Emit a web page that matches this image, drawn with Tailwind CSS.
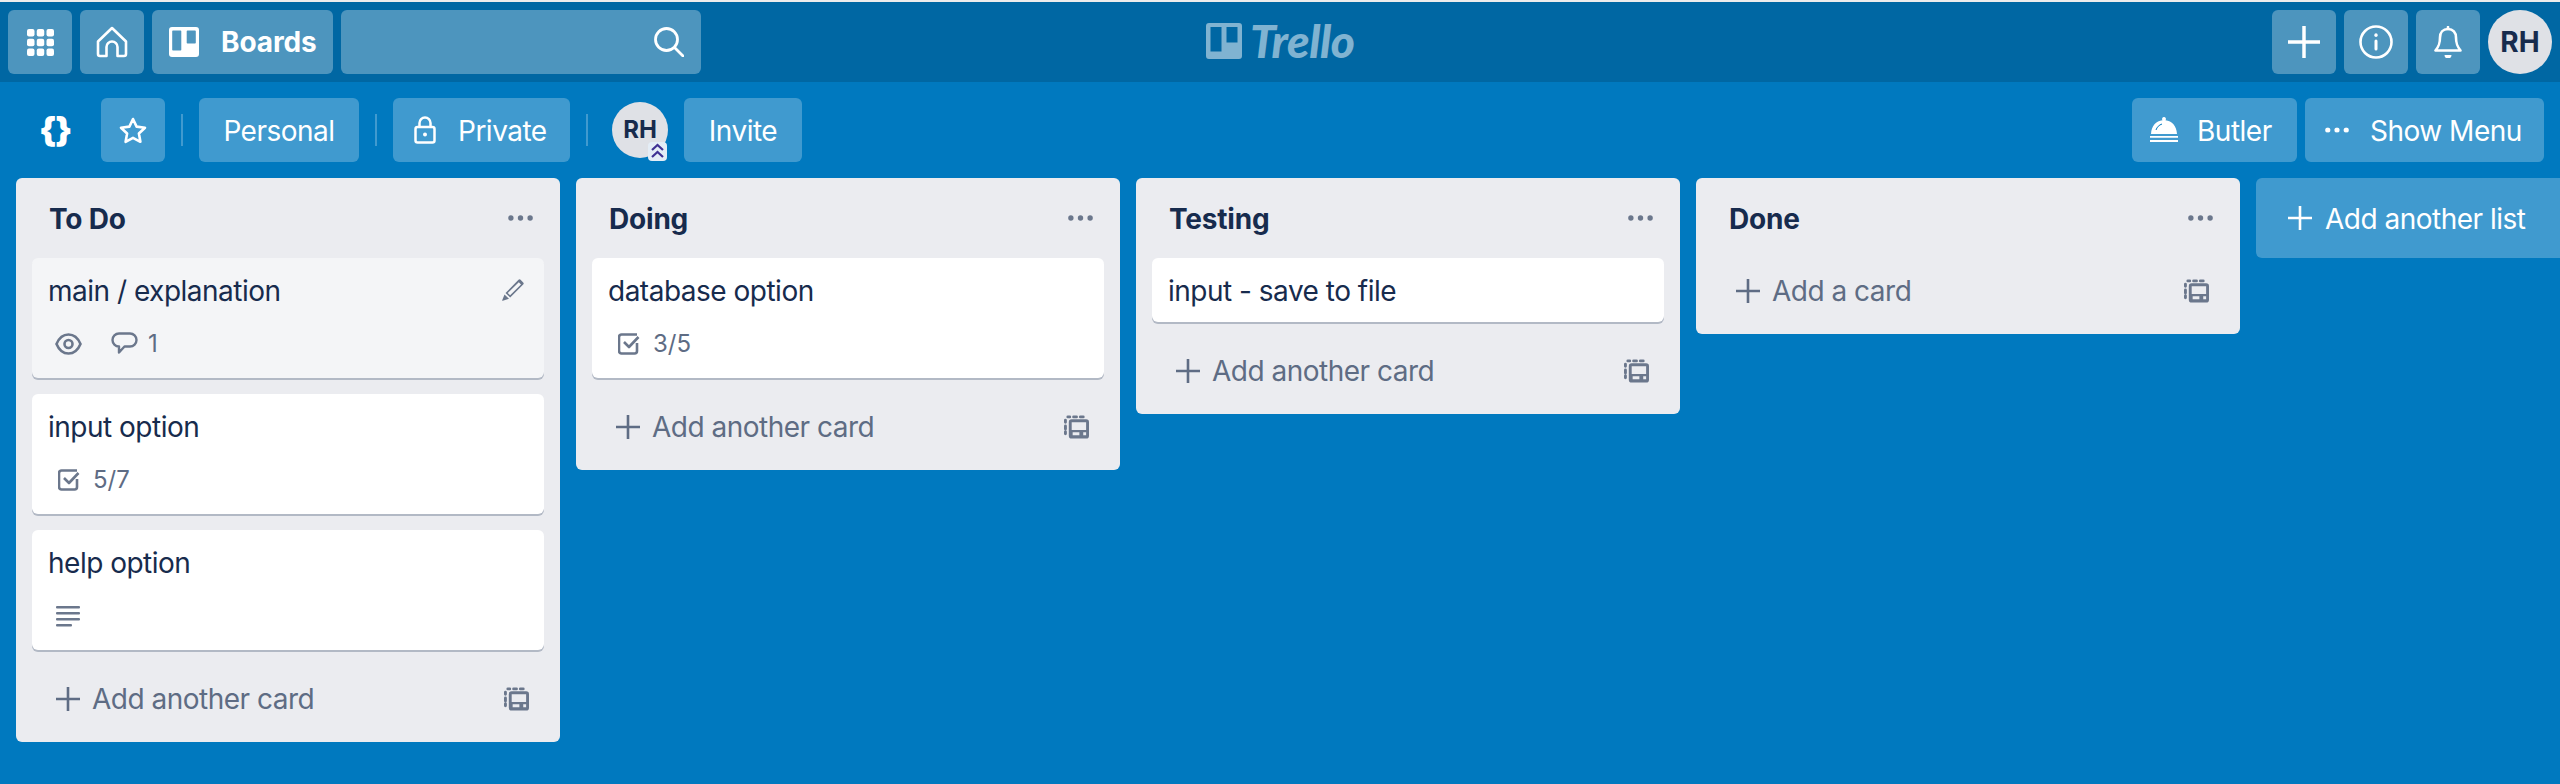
<!DOCTYPE html>
<html lang="en">

<head>
    <meta charset="UTF-8">
    <meta name="viewport" content="width=device-width, initial-scale=1.0">
    <title>Trello board</title>
    <script src="https://cdn.jsdelivr.net/npm/@tailwindcss/browser@4"></script>
</head>

<body class="h-screen overflow-hidden bg-[#0079BF] font-['Inter',sans-serif] text-[28px] tracking-[-0.5px] text-[#172B4D]">
    <!-- shared icons -->
    <svg class="hidden">
        <symbol id="dots" viewBox="0 0 26 6"><circle cx="3" cy="3" r="2.8" /><circle cx="13" cy="3" r="2.8" /><circle cx="23" cy="3" r="2.8" /></symbol>
        <symbol id="plus" viewBox="0 0 24 24"><path d="M12 0v24M0 12h24" stroke="currentColor" stroke-width="2.6" stroke-linecap="round" fill="none" /></symbol>
        <symbol id="template" viewBox="0 0 26 24">
            <path d="M4 1.500h2M10 1.500h3M17 1.500h3M1.500 5v2M1.500 11v3M1.500 17v2" stroke="currentColor" stroke-width="3" stroke-linecap="round" fill="none" />
            <path fill-rule="evenodd" d="M8 4h15a3 3 0 0 1 3 3v14a3 3 0 0 1-3 3H8a3 3 0 0 1-3-3V7a3 3 0 0 1 3-3zm0 3v8h15V7zm1 10.500v3h7v-3zm11 0v3h3v-3z" />
        </symbol>
    </svg>

    <div class="h-[2px] bg-[#ececec]"></div>

    <!-- top nav -->
    <header class="relative flex items-center gap-2 h-20 px-2 bg-[#0067A3] text-white">
        <button class="flex items-center justify-center w-16 h-16 rounded-md bg-white/30">
            <svg class="w-[27px] h-[27px]" viewBox="0 0 27 27" fill="currentColor">
                <rect x="0" y="0" width="7.500" height="7.500" rx="2" /><rect x="9.750" y="0" width="7.500" height="7.500" rx="2" /><rect x="19.500" y="0" width="7.500" height="7.500" rx="2" />
                <rect x="0" y="9.750" width="7.500" height="7.500" rx="2" /><rect x="9.750" y="9.750" width="7.500" height="7.500" rx="2" /><rect x="19.500" y="9.750" width="7.500" height="7.500" rx="2" />
                <rect x="0" y="19.500" width="7.500" height="7.500" rx="2" /><rect x="9.750" y="19.500" width="7.500" height="7.500" rx="2" /><rect x="19.500" y="19.500" width="7.500" height="7.500" rx="2" />
            </svg>
        </button>
        <button class="flex items-center justify-center w-16 h-16 rounded-md bg-white/30">
            <svg class="w-[32px] h-[32px]" viewBox="0 0 32 32" fill="none" stroke="currentColor" stroke-width="2.600" stroke-linejoin="round">
                <path d="M16 2 2 15.500V28a2 2 0 0 0 2 2h6.500V21a5.500 5.500 0 0 1 11 0v9H28a2 2 0 0 0 2-2V15.500z" />
            </svg>
        </button>
        <button class="flex items-center w-[181px] h-16 pl-[17px] rounded-md bg-white/30 font-bold">
            <svg class="w-[30px] h-[30px] shrink-0" viewBox="0 0 30 30" fill="currentColor">
                <path fill-rule="evenodd" d="M3 0h24a3 3 0 0 1 3 3v24a3 3 0 0 1-3 3H3a3 3 0 0 1-3-3V3a3 3 0 0 1 3-3zm1 3.500a.8.8 0 0 0-.8.8v18.400a.8.8 0 0 0 .8.8h7.500a.8.8 0 0 0 .8-.8V4.300a.8.8 0 0 0-.8-.8zm14.500 0a.8.8 0 0 0-.8.8v11.400a.8.8 0 0 0 .8.8H26a.8.8 0 0 0 .8-.8V4.300a.8.8 0 0 0-.8-.8z" />
            </svg>
            <span class="ml-[22px] tracking-[-0.1px]">Boards</span>
        </button>
        <div class="flex items-center justify-end w-[360px] h-16 pr-[17px] rounded-md bg-white/30">
            <svg class="w-[30px] h-[30px]" viewBox="0 0 30 30" fill="none" stroke="currentColor" stroke-width="2.800" stroke-linecap="round">
                <circle cx="12.500" cy="12.500" r="11" /><path d="m21 21 8 8" />
            </svg>
        </div>

        <!-- logo sits centred over the bar -->
        <div class="absolute left-[1206px] top-[21px] flex items-center gap-2 text-[#80B3D1]">
            <svg class="w-9 h-9" viewBox="0 0 36 36" fill="currentColor">
                <path fill-rule="evenodd" d="M3 0h30a3 3 0 0 1 3 3v30a3 3 0 0 1-3 3H3a3 3 0 0 1-3-3V3a3 3 0 0 1 3-3zm1.500 4v24.500h11V4zm16 0v15.500h11V4z" />
            </svg>
            <span class="font-['Lato',sans-serif] text-[46px] leading-[36px] font-black italic tracking-[-0.5px]">Trello</span>
        </div>

        <button class="flex items-center justify-center w-16 h-16 ml-auto rounded-md bg-white/30">
            <svg class="w-[32px] h-[32px]"><use href="#plus" /></svg>
        </button>
        <button class="flex items-center justify-center w-16 h-16 rounded-md bg-white/30">
            <svg class="w-[34px] h-[34px]" viewBox="0 0 34 34" fill="none" stroke="currentColor" stroke-width="2.600" stroke-linecap="round">
                <circle cx="17" cy="17" r="15.500" /><path d="M17 16v8" stroke-width="3" /><path d="M17 10v.2" stroke-width="3.400" />
            </svg>
        </button>
        <button class="flex items-center justify-center w-16 h-16 rounded-md bg-white/30">
            <svg class="w-[28px] h-[32px]" viewBox="0 0 28 32" fill="none" stroke="currentColor" stroke-width="2.600" stroke-linejoin="round">
                <path d="M14 3c-5 0-8 3.500-8 8.500 0 6-1 8.500-4.500 13h25C23 20 22 17.500 22 11.500 22 6.500 19 3 14 3z" />
                <path d="M14 1v2" stroke-linecap="round" /><path d="M10.500 29h7a3.500 3.500 0 0 1-7 0z" fill="currentColor" stroke="none" />
            </svg>
        </button>
        <div class="flex items-center justify-center w-16 h-16 rounded-full bg-[#DFE1E6] font-bold tracking-normal text-[#172B4D]">RH</div>
    </header>

    <!-- board bar -->
    <div class="flex items-center h-16 mt-4 pl-[39px] pr-4 text-white">
        <span class="w-[62px] text-[34px] leading-none font-black tracking-[-1px]">{}</span>
        <button class="flex items-center justify-center w-16 h-16 rounded-md bg-white/25">
            <svg class="w-[28px] h-[27px]" viewBox="0 0 28 27" fill="none" stroke="currentColor" stroke-width="2.600" stroke-linejoin="round">
                <path d="m14 2 3.600 7.600 8.400 1.100-6.100 5.800 1.500 8.300L14 20.800l-7.400 4 1.500-8.300L2 10.700l8.400-1.100z" />
            </svg>
        </button>
        <div class="w-[2px] h-8 mx-4 bg-white/25"></div>
        <button class="h-16 w-40 pt-[2px] rounded-md bg-white/25">Personal</button>
        <div class="w-[2px] h-8 mx-4 bg-white/25"></div>
        <button class="flex items-center w-[177px] h-16 pl-[21px] rounded-md bg-white/25">
            <svg class="w-[22px] h-[28px]" viewBox="0 0 22 28" fill="none" stroke="currentColor" stroke-width="2.500" stroke-linejoin="round">
                <rect x="1.500" y="11" width="19" height="15.500" rx="2" /><path d="M5.500 11V7a5.500 5.500 0 0 1 11 0v4" /><circle cx="11" cy="18.500" r="2" fill="currentColor" stroke="none" />
            </svg>
            <span class="ml-[22px] pt-[2px]">Private</span>
        </button>
        <div class="w-[2px] h-8 ml-4 mr-6 bg-white/25"></div>
        <div class="relative flex items-center justify-center w-14 h-14 rounded-full bg-[#DFE1E6] text-[24px] font-bold tracking-normal text-[#172B4D]">
            RH
            <svg class="absolute left-[36px] top-[40px] w-[19px] h-[19px] rounded-sm bg-[#E4EDF6]" viewBox="0 0 19 19" fill="none" stroke="#403294" stroke-width="2.200">
                <path d="m4 8 5.500-5L15 8M4 15l5.500-5 5.500 5" />
            </svg>
        </div>
        <button class="h-16 w-[118px] ml-4 pt-[2px] rounded-md bg-white/25">Invite</button>

        <button class="flex items-center w-[165px] h-16 ml-auto pl-[18px] rounded-md bg-white/25">
            <svg class="w-[28px] h-[26px]" viewBox="0 0 28 26" fill="currentColor">
                <path d="M14 0a2 2 0 0 1 1.500 3.300C22 4 26.500 9 27 17H1C1.500 9 6 4 12.500 3.300A2 2 0 0 1 14 0z" />
                <path d="M0 19h28v1.800H0zM0 23h28v2H0z" />
                <path d="M6 13c1-3 3-5 6-6" stroke="#0079BF" stroke-width="1" fill="none" />
            </svg>
            <span class="ml-[19px] pt-[2px]">Butler</span>
        </button>
        <button class="flex items-center w-[239px] h-16 ml-2 pl-5 rounded-md bg-white/25">
            <svg class="w-6 h-[6px] fill-current" viewBox="0 0 26 6"><use href="#dots" /></svg>
            <span class="ml-[21px] pt-[2px]">Show Menu</span>
        </button>
    </div>

    <!-- lists -->
    <main class="flex items-start gap-4 mt-4 pl-4">
        <section class="w-[544px] shrink-0 px-4 pb-2 rounded-md bg-[#EBECF0]">
            <div class="flex items-center justify-between h-20 pl-[17px] pr-[11px]">
                <h2 class="pt-[2px] font-bold tracking-[-0.2px]">To Do</h2>
                <svg class="w-[25px] h-[6px] fill-[#6B778C]"><use href="#dots" /></svg>
            </div>
            <div class="relative mb-4 px-4 pt-[13px] pb-[12px] rounded-md bg-[#F4F5F7] shadow-[0_2px_0_rgba(9,30,66,0.25)]">
                <div class="leading-10">main / explanation</div>
                <svg class="absolute right-[20px] top-[21px] w-[22px] h-[22px]" viewBox="0 0 22 22" fill="#6B778C">
                    <path fill-rule="evenodd" d="M16.500.8a1.500 1.500 0 0 1 2.100 0l2.600 2.600a1.500 1.500 0 0 1 0 2.100L8.200 18.500 3.500 14zM16.800 3.300 5.800 14l2.300 2.300L19 5.500zM2.500 15.500l4.500 4.200-6.200 2.100a.5.5 0 0 1-.6-.6z" />
                </svg>
                <div class="flex items-center h-11 mt-[11px] pl-[7px] text-[24px] tracking-normal text-[#5E6C84]">
                    <svg class="w-[27px] h-[22px]" viewBox="0 0 27 22" fill="none" stroke="#6B778C" stroke-width="2.600">
                        <path d="M1.500 11C4 5 8 1.500 13.500 1.500S23 5 25.500 11C23 17 19 20.500 13.500 20.500S4 17 1.500 11z" /><circle cx="13.500" cy="11" r="4" />
                    </svg>
                    <svg class="w-[27px] h-[24px] ml-[29px]" viewBox="0 0 27 24" fill="none" stroke="#6B778C" stroke-width="2.400" stroke-linejoin="round">
                        <path d="M8 1.500h11a6.500 6.500 0 0 1 0 13h-5.500L8 20.500v-6a6.500 6.500 0 0 1 0-13z" />
                    </svg>
                    <span class="ml-[10px]">1</span>
                </div>
            </div>
            <div class="mb-4 px-4 pt-[13px] pb-[12px] rounded-md bg-white shadow-[0_2px_0_rgba(9,30,66,0.25)]">
                <div class="leading-10">input option</div>
                <div class="flex items-center h-11 mt-[11px] pl-[10px] text-[24px] tracking-normal text-[#5E6C84]">
                    <svg class="w-[22px] h-[22px]" viewBox="0 0 22 22" fill="none" stroke="#6B778C" stroke-width="2.600" stroke-linejoin="round">
                        <path d="M19 10v8a2.500 2.500 0 0 1-2.500 2.500h-13A2.500 2.500 0 0 1 1 18V4a2.500 2.500 0 0 1 2.500-2.500H19" /><path d="m6 9 5 5 9.500-10" />
                    </svg>
                    <span class="ml-[13px]">5/7</span>
                </div>
            </div>
            <div class="mb-4 px-4 pt-[13px] pb-[12px] rounded-md bg-white shadow-[0_2px_0_rgba(9,30,66,0.25)]">
                <div class="leading-10">help option</div>
                <div class="flex items-center h-11 mt-[11px] pl-2">
                    <svg class="w-6 h-[21px]" viewBox="0 0 24 21" fill="#6B778C">
                        <rect y="0" width="24" height="2.600" rx="1" /><rect y="6" width="24" height="2.600" rx="1" /><rect y="12" width="24" height="2.600" rx="1" /><rect y="18" width="16" height="2.600" rx="1" />
                    </svg>
                </div>
            </div>
            <div class="flex items-center h-[68px] pb-[3px] pl-6 pr-[15px] text-[#5E6C84]">
                <svg class="w-6 h-6 fill-none"><use href="#plus" /></svg>
                <span class="ml-3">Add another card</span>
                <svg class="w-[25px] h-[24px] ml-auto fill-[#6B778C] text-[#6B778C]"><use href="#template" /></svg>
            </div>
        </section>

        <section class="w-[544px] shrink-0 px-4 pb-2 rounded-md bg-[#EBECF0]">
            <div class="flex items-center justify-between h-20 pl-[17px] pr-[11px]">
                <h2 class="pt-[2px] font-bold tracking-[-0.2px]">Doing</h2>
                <svg class="w-[25px] h-[6px] fill-[#6B778C]"><use href="#dots" /></svg>
            </div>
            <div class="mb-4 px-4 pt-[13px] pb-[12px] rounded-md bg-white shadow-[0_2px_0_rgba(9,30,66,0.25)]">
                <div class="leading-10">database option</div>
                <div class="flex items-center h-11 mt-[11px] pl-[10px] text-[24px] tracking-normal text-[#5E6C84]">
                    <svg class="w-[22px] h-[22px]" viewBox="0 0 22 22" fill="none" stroke="#6B778C" stroke-width="2.600" stroke-linejoin="round">
                        <path d="M19 10v8a2.500 2.500 0 0 1-2.500 2.500h-13A2.500 2.500 0 0 1 1 18V4a2.500 2.500 0 0 1 2.500-2.500H19" /><path d="m6 9 5 5 9.500-10" />
                    </svg>
                    <span class="ml-[13px]">3/5</span>
                </div>
            </div>
            <div class="flex items-center h-[68px] pb-[3px] pl-6 pr-[15px] text-[#5E6C84]">
                <svg class="w-6 h-6 fill-none"><use href="#plus" /></svg>
                <span class="ml-3">Add another card</span>
                <svg class="w-[25px] h-[24px] ml-auto fill-[#6B778C] text-[#6B778C]"><use href="#template" /></svg>
            </div>
        </section>

        <section class="w-[544px] shrink-0 px-4 pb-2 rounded-md bg-[#EBECF0]">
            <div class="flex items-center justify-between h-20 pl-[17px] pr-[11px]">
                <h2 class="pt-[2px] font-bold tracking-[-0.2px]">Testing</h2>
                <svg class="w-[25px] h-[6px] fill-[#6B778C]"><use href="#dots" /></svg>
            </div>
            <div class="mb-4 px-4 pt-[13px] pb-[11px] rounded-md bg-white shadow-[0_2px_0_rgba(9,30,66,0.25)]">
                <div class="leading-10">input - save to file</div>
            </div>
            <div class="flex items-center h-[68px] pb-[3px] pl-6 pr-[15px] text-[#5E6C84]">
                <svg class="w-6 h-6 fill-none"><use href="#plus" /></svg>
                <span class="ml-3">Add another card</span>
                <svg class="w-[25px] h-[24px] ml-auto fill-[#6B778C] text-[#6B778C]"><use href="#template" /></svg>
            </div>
        </section>

        <section class="w-[544px] shrink-0 px-4 pb-2 rounded-md bg-[#EBECF0]">
            <div class="flex items-center justify-between h-20 pl-[17px] pr-[11px]">
                <h2 class="pt-[2px] font-bold tracking-[-0.2px]">Done</h2>
                <svg class="w-[25px] h-[6px] fill-[#6B778C]"><use href="#dots" /></svg>
            </div>
            <div class="flex items-center h-[68px] pb-[3px] pl-6 pr-[15px] text-[#5E6C84]">
                <svg class="w-6 h-6 fill-none"><use href="#plus" /></svg>
                <span class="ml-3">Add a card</span>
                <svg class="w-[25px] h-[24px] ml-auto fill-[#6B778C] text-[#6B778C]"><use href="#template" /></svg>
            </div>
        </section>

        <button class="flex items-center w-[320px] h-20 shrink-0 pl-8 rounded-l-md bg-white/25 text-white">
            <svg class="w-6 h-6 fill-none"><use href="#plus" /></svg>
            <span class="ml-[13px] pt-[2px]">Add another list</span>
        </button>
    </main>
</body>

</html>
